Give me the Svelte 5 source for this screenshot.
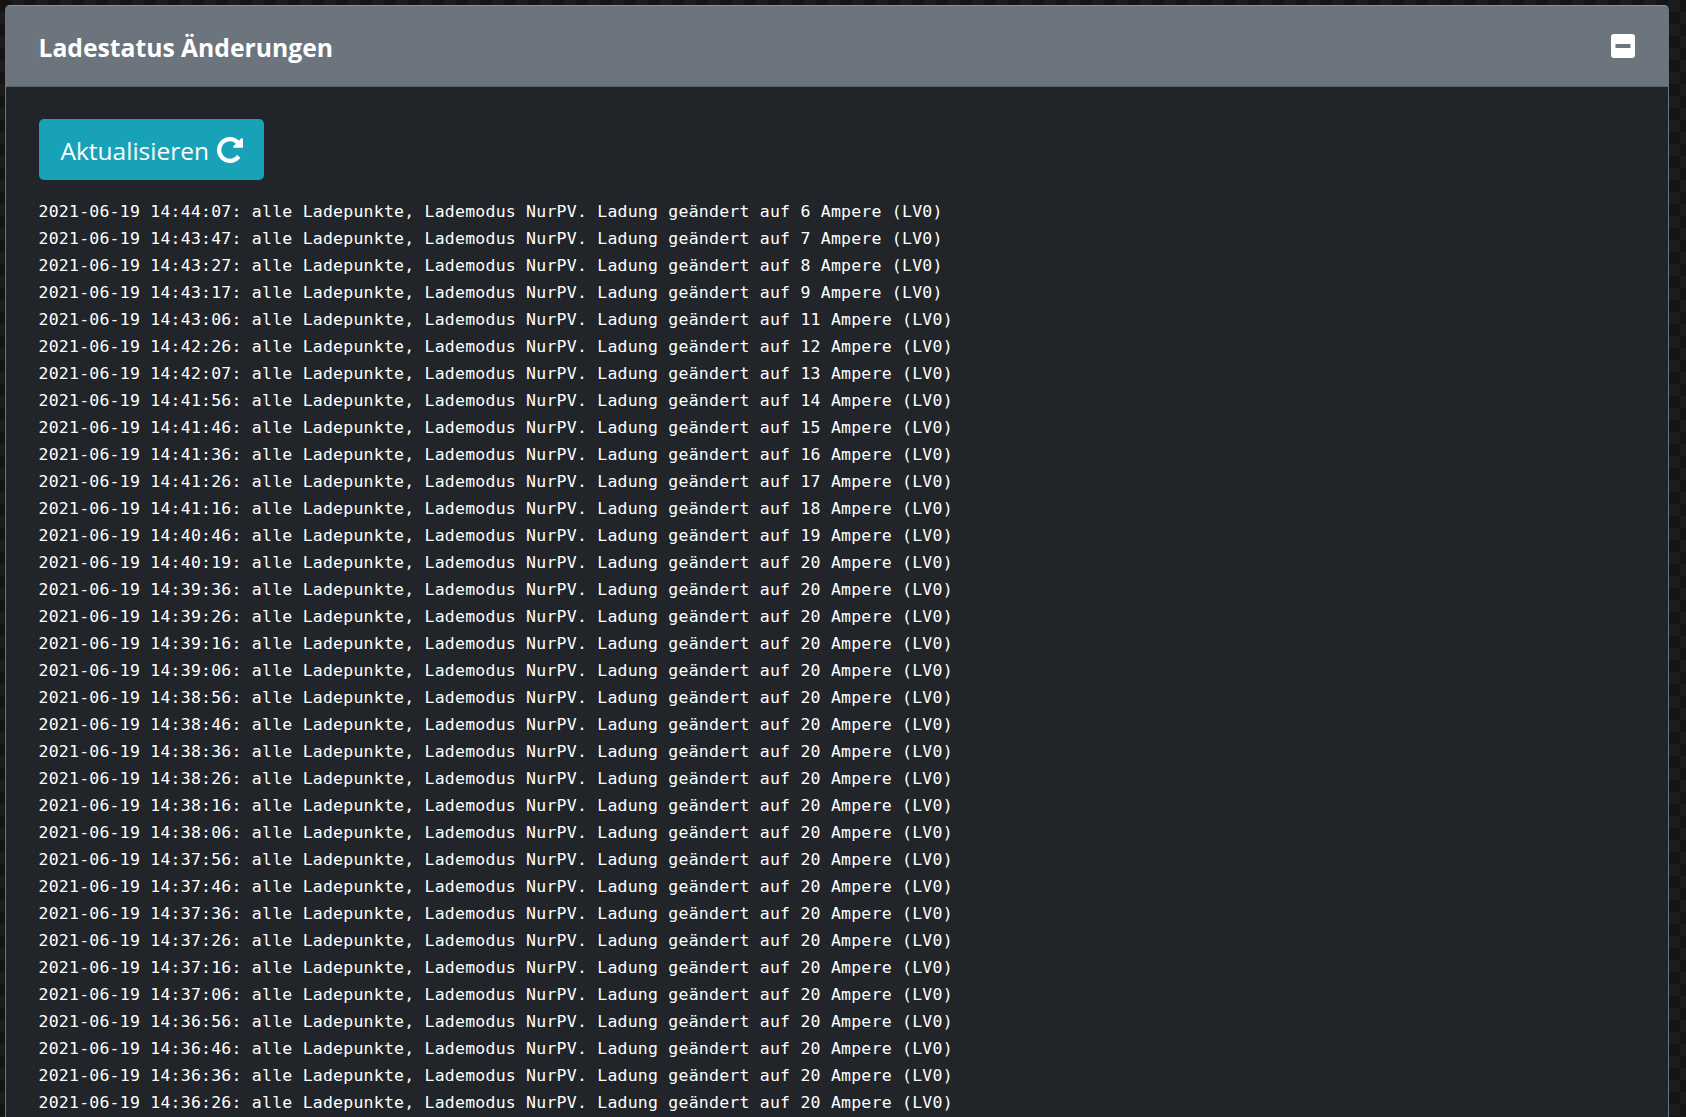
<script>
  const rows = [
    ['14:44:07', 6], ['14:43:47', 7], ['14:43:27', 8], ['14:43:17', 9], ['14:43:06', 11],
    ['14:42:26', 12], ['14:42:07', 13], ['14:41:56', 14], ['14:41:46', 15], ['14:41:36', 16],
    ['14:41:26', 17], ['14:41:16', 18], ['14:40:46', 19], ['14:40:19', 20], ['14:39:36', 20],
    ['14:39:26', 20], ['14:39:16', 20], ['14:39:06', 20], ['14:38:56', 20], ['14:38:46', 20],
    ['14:38:36', 20], ['14:38:26', 20], ['14:38:16', 20], ['14:38:06', 20], ['14:37:56', 20],
    ['14:37:46', 20], ['14:37:36', 20], ['14:37:26', 20], ['14:37:16', 20], ['14:37:06', 20],
    ['14:36:56', 20], ['14:36:46', 20], ['14:36:36', 20], ['14:36:26', 20]
  ];
</script>

<div class="page">
  <section class="card">
    <header class="head">
      <h3>Ladestatus Änderungen</h3>
      <svg class="minus" viewBox="0 0 24 24" aria-hidden="true">
        <path fill="#fff" fill-rule="evenodd" d="M3 0h18a3 3 0 0 1 3 3v18a3 3 0 0 1-3 3H3a3 3 0 0 1-3-3V3a3 3 0 0 1 3-3zM4.500 10h15v4h-15z"/>
      </svg>
    </header>
    <div class="body">
      <button class="btn">Aktualisieren
        <svg class="redo" viewBox="0 128 1536 1536" aria-hidden="true">
          <path fill="#fff" d="M1536 256v448q0 26-19 45t-45 19h-448q-42 0-59-40-17-39 14-69l138-138q-148-137-349-137-104 0-198.500 40.500t-163.500 109.500-109.500 163.500-40.500 198.500 40.500 198.500 109.500 163.500 163.500 109.500 198.500 40.500q119 0 225-52t179-147q7-10 23-12 15 0 25 9l137 138q9 8 9.500 20.500t-7.500 22.500q-109 132-264 204.500t-327 72.500q-156 0-298-61t-245-164-164-245-61-298 61-298 164-245 245-164 298-61q147 0 284.500 55.500t244.500 156.500l130-129q29-31 70-14 39 17 39 59z"/>
        </svg>
      </button>
      <pre class="log">{#each rows as [t, a]}<div>2021-06-19 {t}: alle Ladepunkte, Lademodus NurPV. Ladung geändert auf {a} Ampere (LV0)</div>{/each}</pre>
    </div>
  </section>
</div>

<style>
  :global(body) {
    margin: 0;
    background: conic-gradient(#1c1c1c 25%, #141414 0 50%, #1c1c1c 0 75%, #141414 0) 0 0 / 24px 24px;
    overflow: hidden;
  }
  .page {
    height: 1117px;
    padding: 5px 17px 0 5px;
    box-sizing: border-box;
    overflow: hidden;
  }
  .card {
    background: #212529;
    border: 1px solid #6c757d;
    border-top-color: #8a9096;
    border-radius: 5px 5px 0 0;
    height: 1200px;
    box-sizing: border-box;
  }
  .head {
    height: 81px;
    box-sizing: border-box;
    background: #6c757d;
    border-bottom: 1px solid #5c6369;
    display: flex;
    align-items: center;
    justify-content: space-between;
    padding: 0 33px 0 32.500px;
  }
  h3 {
    margin: 4px 0 0;
    color: #fff;
    font: 700 24.700px/1.2 "Open Sans", sans-serif;
  }
  .minus { width: 24px; height: 24px; margin-top: -1px; }
  .body { padding: 32px 33px 0 32.500px; }
  .btn {
    display: block;
    width: 225px;
    height: 61px;
    background: #17a2b8;
    border: none;
    border-radius: 5px;
    color: #fff;
    font: 400 24.500px/1 "Open Sans", sans-serif;
    padding: 2px 0 0 22px;
    text-align: left;
  }
  .redo { width: 26px; height: 26px; vertical-align: -3px; margin-left: 2px; }
  .log {
    margin: 18px 0 0;
    color: #fff;
    font: 400 16.500px/27px "DejaVu Sans Mono", monospace;
    letter-spacing: 0.225px;
  }
</style>
